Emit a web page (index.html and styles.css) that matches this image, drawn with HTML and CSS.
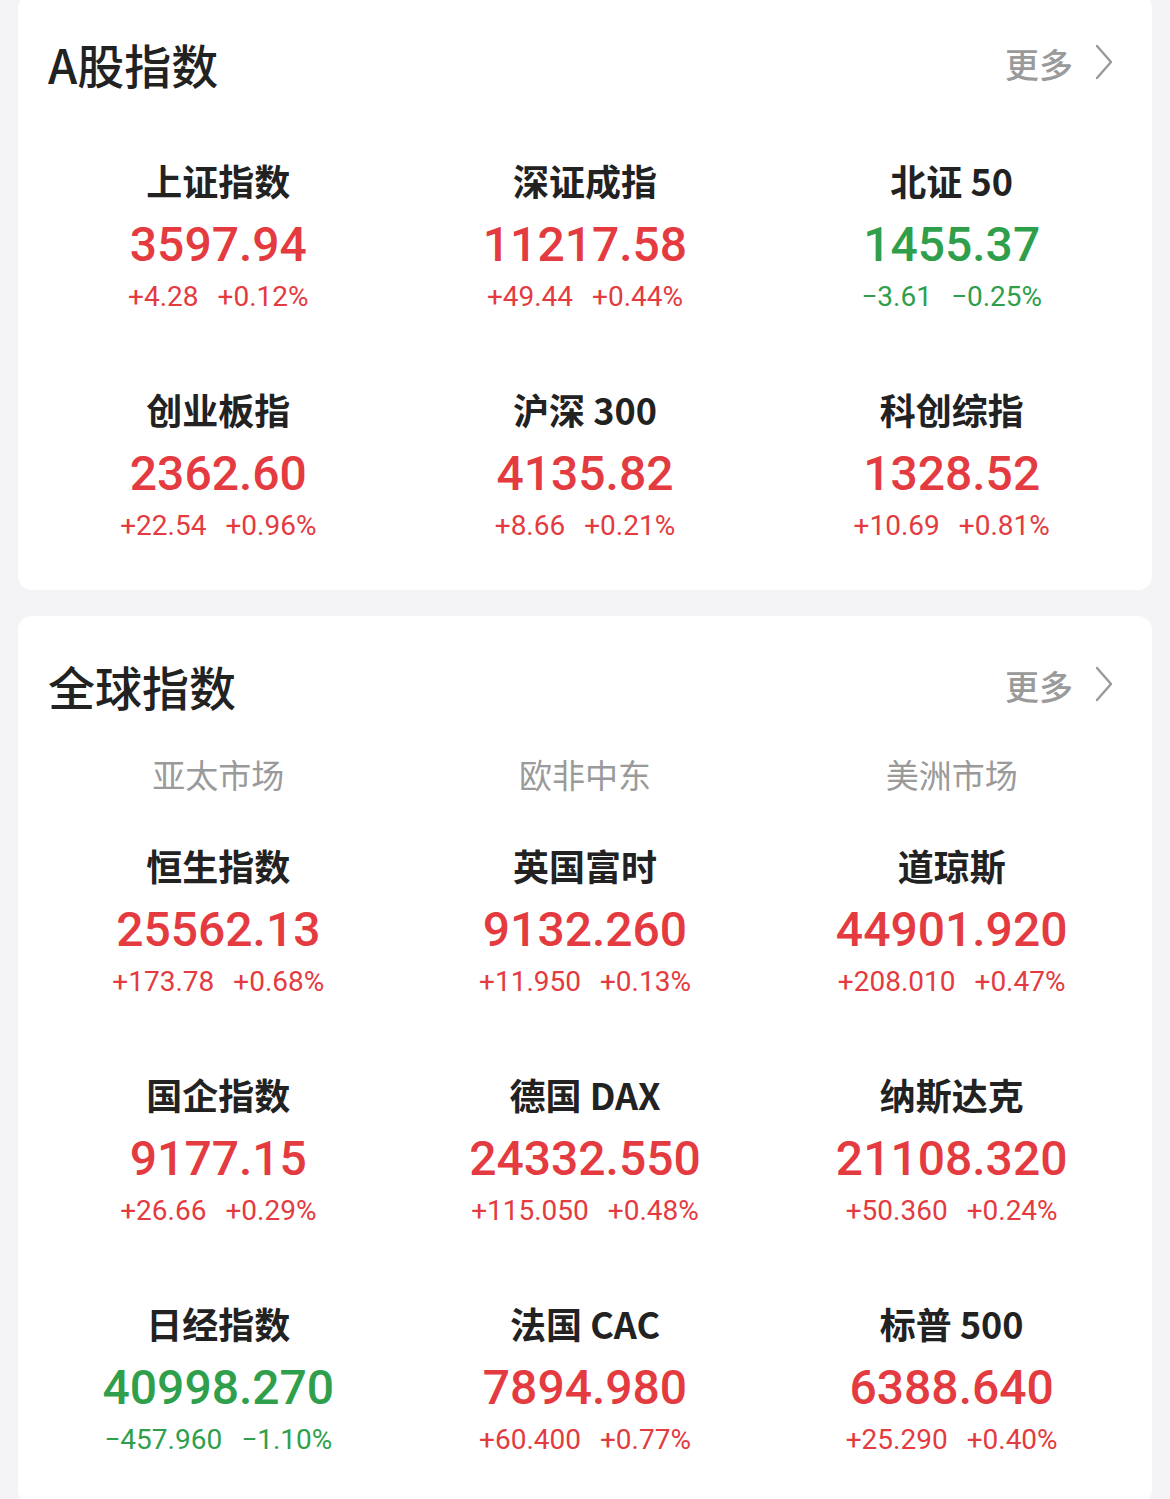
FILE: index.html
```html
<!DOCTYPE html>
<html lang="zh-CN">
<head>
<meta charset="utf-8">
<title>指数</title>
<link rel="stylesheet" href="styles.css">
</head>
<body>
<div class="page">
  <section class="card">
    <div class="card-head">
      <h2 class="title">A股指数</h2>
      <div class="more">更多<svg class="chev" width="20" height="36" viewBox="0 0 20 36"><polyline points="3,2 17,18 3,34" fill="none" stroke="#9a9a9a" stroke-width="2.4" stroke-linecap="round" stroke-linejoin="round"/></svg></div>
    </div>
    <div class="grid">
      <div class="cell"><div class="name">上证指数</div><div class="value up">3597.94</div><div class="chg up"><span>+4.28</span><span>+0.12%</span></div></div>
      <div class="cell"><div class="name">深证成指</div><div class="value up">11217.58</div><div class="chg up"><span>+49.44</span><span>+0.44%</span></div></div>
      <div class="cell"><div class="name">北证 50</div><div class="value down">1455.37</div><div class="chg down"><span>−3.61</span><span>−0.25%</span></div></div>
      <div class="cell"><div class="name">创业板指</div><div class="value up">2362.60</div><div class="chg up"><span>+22.54</span><span>+0.96%</span></div></div>
      <div class="cell"><div class="name">沪深 300</div><div class="value up">4135.82</div><div class="chg up"><span>+8.66</span><span>+0.21%</span></div></div>
      <div class="cell"><div class="name">科创综指</div><div class="value up">1328.52</div><div class="chg up"><span>+10.69</span><span>+0.81%</span></div></div>
    </div>
  </section>
  <section class="card">
    <div class="card-head">
      <h2 class="title">全球指数</h2>
      <div class="more">更多<svg class="chev" width="20" height="36" viewBox="0 0 20 36"><polyline points="3,2 17,18 3,34" fill="none" stroke="#9a9a9a" stroke-width="2.4" stroke-linecap="round" stroke-linejoin="round"/></svg></div>
    </div>
    <div class="markets">
      <div>亚太市场</div><div>欧非中东</div><div>美洲市场</div>
    </div>
    <div class="grid">
      <div class="cell"><div class="name">恒生指数</div><div class="value up">25562.13</div><div class="chg up"><span>+173.78</span><span>+0.68%</span></div></div>
      <div class="cell"><div class="name">英国富时</div><div class="value up">9132.260</div><div class="chg up"><span>+11.950</span><span>+0.13%</span></div></div>
      <div class="cell"><div class="name">道琼斯</div><div class="value up">44901.920</div><div class="chg up"><span>+208.010</span><span>+0.47%</span></div></div>
      <div class="cell"><div class="name">国企指数</div><div class="value up">9177.15</div><div class="chg up"><span>+26.66</span><span>+0.29%</span></div></div>
      <div class="cell"><div class="name">德国 DAX</div><div class="value up">24332.550</div><div class="chg up"><span>+115.050</span><span>+0.48%</span></div></div>
      <div class="cell"><div class="name">纳斯达克</div><div class="value up">21108.320</div><div class="chg up"><span>+50.360</span><span>+0.24%</span></div></div>
      <div class="cell"><div class="name">日经指数</div><div class="value down">40998.270</div><div class="chg down"><span>−457.960</span><span>−1.10%</span></div></div>
      <div class="cell"><div class="name">法国 CAC</div><div class="value up">7894.980</div><div class="chg up"><span>+60.400</span><span>+0.77%</span></div></div>
      <div class="cell"><div class="name">标普 500</div><div class="value up">6388.640</div><div class="chg up"><span>+25.290</span><span>+0.40%</span></div></div>
    </div>
  </section>
</div>
</body>
</html>
```
FILE: styles.css
```css
html, body {
  margin: 0;
  padding: 0;
}
body {
  background: #f4f4f6;
  font-family: "Noto Sans CJK SC", "Noto Sans", sans-serif;
  color: #222;
  width: 1170px;
  overflow: hidden;
}
.page {
  margin-top: -6px;
  padding: 0 18px;
  display: flex;
  flex-direction: column;
  gap: 26px;
}
.card {
  background: #fff;
  border-radius: 14px;
  padding-bottom: 44px;
}
.card-head {
  display: flex;
  align-items: center;
  justify-content: space-between;
  padding: 40px 38px 0 30px;
  height: 60px;
}
.title {
  margin: 0;
  font-size: 47px;
  font-weight: 500;
  line-height: 60px;
  color: #222;
}
.more {
  display: flex;
  align-items: center;
  font-size: 34px;
  font-weight: 500;
  color: #9a9a9a;
  line-height: 60px;
}
.chev {
  margin-left: 21px;
  margin-top: -4px;
}
.markets {
  display: grid;
  grid-template-columns: repeat(3, 1fr);
  padding: 0 17px;
  margin-top: 36px;
  font-size: 33px;
  line-height: 44px;
  color: #9a9a9a;
  text-align: center;
}
.grid {
  display: grid;
  grid-template-columns: repeat(3, 1fr);
  row-gap: 67px;
  padding: 0 17px;
  margin-top: 61px;
}
.markets + .grid {
  margin-top: 44px;
}
.cell {
  display: flex;
  flex-direction: column;
  align-items: center;
}
.name {
  font-size: 36px;
  font-weight: 700;
  line-height: 50px;
  color: #222;
  white-space: nowrap;
}
.value {
  font-family: Roboto, "Noto Sans", sans-serif;
  font-size: 48px;
  font-weight: 500;
  line-height: 56px;
  margin-top: 12px;
}
.chg {
  display: flex;
  gap: 19px;
  font-family: Roboto, "Noto Sans", sans-serif;
  font-size: 28px;
  line-height: 40px;
  margin-top: 4px;
}
.up { color: #e33b40; }
.down { color: #2f9f4c; }
```
